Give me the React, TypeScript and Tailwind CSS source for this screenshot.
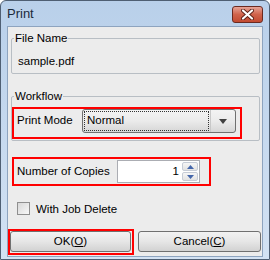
const font = { fontFamily: '"Liberation Sans", Arial, sans-serif' };

function CloseButton() {
  return (
    <div className="mt-[5px] flex h-[17px] w-[31px] items-center justify-center rounded-[3px] border border-[#6b2a20] bg-gradient-to-b from-[#e5a396] via-[#d0634b] to-[#c24a31]">
      <svg width="13" height="11" viewBox="0 0 13 11">
        <path d="M2 1.5 L11 9.5 M11 1.5 L2 9.5" stroke="#5a2016" strokeWidth="4" strokeLinecap="round" />
        <path d="M2 1.5 L11 9.5 M11 1.5 L2 9.5" stroke="#ffffff" strokeWidth="2.2" strokeLinecap="round" />
      </svg>
    </div>
  );
}

function Combo() {
  return (
    <div className="flex h-[24px] w-[154px] rounded-[3px] border border-[#707070] bg-gradient-to-b from-[#f3f3f3] via-[#ebebeb] to-[#d6d6d6]">
      <div className="m-[1px] flex flex-1 items-center border border-dotted border-[#333] pl-[2px] text-black">
        Normal
      </div>
      <div className="flex w-[25px] items-center justify-center border-l border-[#c8c8c8]">
        <svg width="8" height="5" viewBox="0 0 8 5">
          <path d="M0 0 H8 L4 5 Z" fill="#404040" />
        </svg>
      </div>
    </div>
  );
}

function Spin() {
  return (
    <div className="flex h-[23px] w-[83px] border border-[#abadb3] bg-white">
      <div className="flex flex-1 items-center justify-end pr-[3px] text-black">1</div>
      <div className="my-[1px] mr-[1px] flex w-[16px] flex-col gap-[1px]">
        <div className="flex flex-1 items-center justify-center rounded-[2px] border border-[#c6ccd6] bg-gradient-to-b from-[#f6f6f6] to-[#e2e2e2]">
          <svg width="7" height="4" viewBox="0 0 7 4">
            <path d="M0 4 H7 L3.5 0 Z" fill="#4466aa" />
          </svg>
        </div>
        <div className="flex flex-1 items-center justify-center rounded-[2px] border border-[#c6ccd6] bg-gradient-to-b from-[#f6f6f6] to-[#e2e2e2]">
          <svg width="7" height="4" viewBox="0 0 7 4">
            <path d="M0 0 H7 L3.5 4 Z" fill="#4466aa" />
          </svg>
        </div>
      </div>
    </div>
  );
}

function Button({ label, mnemonic, className }: { label: string; mnemonic: string; className: string }) {
  return (
    <div
      className={`flex h-[21px] items-center justify-center rounded-[3px] border border-[#707070] bg-gradient-to-b from-[#f2f2f2] via-[#e6e6e6] to-[#d2d2d2] text-black ${className}`}
    >
      {label}(<span className="underline">{mnemonic}</span>)
    </div>
  );
}

export default function App() {
  return (
    <div
      style={font}
      className="flex h-[260px] w-[270px] flex-col rounded-t-[6px] border border-[#4f5f73] bg-gradient-to-b from-[#b9d0ea] to-[#d3e2f3] px-[6px] pb-[2px]"
    >
      <div className="flex h-[25px] items-start justify-between">
        <span className="mt-[5px] text-[13px] leading-[16px] text-[#1a2a3a]">Print</span>
        <CloseButton />
      </div>

      <div className="flex flex-1 flex-col border border-[#8ea4bf] bg-[#ececec] text-[11.5px] text-black">
        <fieldset className="ml-[3px] mt-[4px] h-[43px] w-[249px] rounded-[2px] border border-[#b8bec4] pl-[2px]">
          <legend className="px-[1px] leading-[14px]">File Name</legend>
          <div className="pl-[4px] pt-[9px] leading-[14px]">sample.pdf</div>
        </fieldset>

        <fieldset className="ml-[3px] mt-[15px] h-[52px] w-[249px] rounded-[2px] border border-[#b8bec4] pl-[2px]">
          <legend className="px-[1px] leading-[14px]">Workflow</legend>
          <div className="ml-[-2px] mt-[4px] flex h-[32px] w-[230px] items-center border-2 border-[#ff0000] pb-[4px]">
            <span className="w-[68px] pl-[3px]">Print Mode</span>
            <Combo />
          </div>
        </fieldset>

        <div className="ml-[4px] mt-[16px] flex h-[29px] w-[199px] items-center border-2 border-[#ff0000]">
          <span className="w-[103px] pl-[3px]">Number of Copies</span>
          <Spin />
        </div>

        <div className="ml-[9px] mt-[16px] flex h-[13px] items-center gap-[6px]">
          <div className="h-[13px] w-[13px] border border-[#8f8f8f] bg-gradient-to-br from-[#d8d8d8] to-[#f8f8f8]" />
          <span className="leading-[14px]">With Job Delete</span>
        </div>

        <div className="mt-[14px] flex">
          <div className="h-[26px] w-[126px] border-2 border-[#ff0000]">
            <Button label="OK" mnemonic="O" className="w-[121px]" />
          </div>
          <Button label="Cancel" mnemonic="C" className="ml-[4px] mt-[2px] w-[123px]" />
        </div>
      </div>
    </div>
  );
}
